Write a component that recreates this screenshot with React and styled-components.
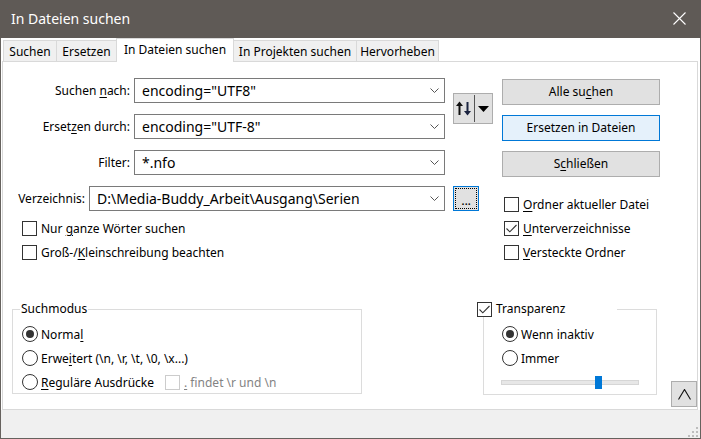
import React from 'react';
import styled, { createGlobalStyle } from 'styled-components';

const Global = createGlobalStyle`
  html, body { margin: 0; padding: 0; background: #fff; }
  body { font-family: "Noto Sans", "Segoe UI", sans-serif; font-size: 12px; color: #000; }
  * { box-sizing: border-box; }
  u { text-decoration: underline; text-underline-offset: 2px; }
`;

const Window = styled.div`
  width: 701px;
  height: 439px;
  display: flex;
  flex-direction: column;
  background: #fff;
  overflow: hidden;
`;

const TitleBar = styled.div`
  height: 38px;
  flex: none;
  background: #5f5a56;
  color: #fff;
  display: flex;
  align-items: center;
  justify-content: space-between;
  padding: 0 15px 1px 11px;
  font-size: 14px;
`;

const Body = styled.div`
  flex: 1;
  display: flex;
  flex-direction: column;
  border: 1px solid #66625e;
  border-top: none;
  min-height: 0;
`;

const TabStrip = styled.div`
  height: 23px;
  flex: none;
  display: flex;
  align-items: flex-end;
  padding-left: 2px;
  position: relative;
  z-index: 1;
`;

const Tab = styled.div`
  width: ${p => p.$w}px;
  height: ${p => (p.$active ? 24 : 21)}px;
  margin-left: ${p => (p.$first ? 0 : -1)}px;
  margin-bottom: ${p => (p.$active ? -1 : 0)}px;
  border: 1px solid #d9d9d9;
  border-bottom: none;
  background: ${p => (p.$active ? '#fff' : '#f0f0f0')};
  display: flex;
  align-items: center;
  justify-content: center;
  padding-bottom: ${p => (p.$active ? 3 : 0)}px;
  white-space: nowrap;
  position: relative;
  z-index: ${p => (p.$active ? 2 : 1)};
`;

const Panel = styled.div`
  height: 349px;
  flex: none;
  margin: 0 2px 0 1px;
  border: 1px solid #d9d9d9;
  display: flex;
  flex-direction: column;
  padding-bottom: 2px;
`;

const StatusStrip = styled.div`
  flex: 1;
  background: #f0f0f0;
  display: flex;
  justify-content: flex-end;
  align-items: flex-end;
  padding-right: 1px;
`;

const TopSection = styled.div`
  display: flex;
  padding-top: 16px;
`;

const FormCol = styled.div`
  width: 442px;
  display: flex;
  flex-direction: column;
  gap: 11px;
`;

const FieldRow = styled.div`
  display: flex;
  align-items: center;
  height: 25px;
  gap: 4px;
`;

const Label = styled.div`
  width: ${p => p.$w}px;
  flex: none;
  text-align: right;
  white-space: nowrap;
`;

const Combo = styled.div`
  flex: 1;
  height: 25px;
  border: 1px solid #7a7a7a;
  display: flex;
  align-items: center;
  justify-content: space-between;
  padding: 0 5px 1px 7px;
  font-size: 14px;
  white-space: nowrap;
`;

const CheckList = styled.div`
  display: flex;
  flex-direction: column;
  gap: 9px;
  margin-top: ${p => p.$mt}px;
  padding-left: ${p => p.$pl}px;
`;

const CheckRow = styled.label`
  display: flex;
  align-items: center;
  height: 15px;
  gap: 4px;
  white-space: nowrap;
  color: ${p => (p.$disabled ? '#838383' : '#000')};
`;

const Box = styled.span`
  width: 15px;
  height: 15px;
  flex: none;
  border: 1px solid ${p => (p.$disabled ? '#cccccc' : '#333')};
  background: #fff;
  display: flex;
  align-items: center;
  justify-content: center;
`;

const MidCol = styled.div`
  width: 40px;
  margin-left: 8px;
  padding-top: 15px;
  display: flex;
  flex-direction: column;
`;

const SwapButton = styled.div`
  width: 40px;
  height: 31px;
  background: #e1e1e1;
  border: 1px solid #adadad;
  display: flex;
  align-items: center;
  padding-left: 2px;
`;

const Divider = styled.span`
  width: 1px;
  height: 27px;
  background: #555;
  margin: 0 3px 0 2px;
`;

const BrowseButton = styled.div`
  width: 26px;
  height: 25px;
  margin-top: 62px;
  background: #e1e1e1;
  border: 1px solid #0078d7;
  padding: 1px;
`;

const FocusRect = styled.div`
  width: 100%;
  height: 100%;
  border: 1px dotted #000;
  display: flex;
  justify-content: center;
  align-items: flex-end;
  font-size: 13px;
  line-height: 15px;
  letter-spacing: -0.3px;
`;

const RightCol = styled.div`
  width: 158px;
  margin-left: 9px;
  padding-top: 1px;
  display: flex;
  flex-direction: column;
`;

const ButtonStack = styled.div`
  display: flex;
  flex-direction: column;
  gap: 10px;
`;

const Button = styled.div`
  height: 26px;
  background: ${p => (p.$focused ? '#e5f1fb' : '#e1e1e1')};
  border: 1px solid ${p => (p.$focused ? '#0078d7' : '#adadad')};
  display: flex;
  align-items: center;
  justify-content: center;
  padding-bottom: 1px;
  white-space: nowrap;
`;

const BottomSection = styled.div`
  margin-top: auto;
  display: flex;
  align-items: flex-start;
`;

const Group = styled.fieldset`
  margin: 0 0 0 ${p => p.$ml}px;
  width: ${p => p.$w}px;
  height: ${p => p.$h}px;
  border: 1px solid #dcdcdc;
  padding: 0 0 0 ${p => p.$lp}px;
  min-width: 0;
`;

const Legend = styled.legend`
  padding: 0 1px;
  height: 16px;
  line-height: 16px;
  margin-left: ${p => p.$ml || 0}px;
  display: flex;
  align-items: center;
  gap: 4px;
  width: ${p => (p.$w ? `${p.$w}px` : 'auto')};
  background: #fff;
`;

const GroupBody = styled.div`
  display: flex;
  flex-direction: column;
  gap: 8px;
  padding-top: 9px;
  padding-left: ${p => p.$pl}px;
`;

const RadioRow = styled.div`
  display: flex;
  align-items: center;
  height: 16px;
  gap: 3px;
  white-space: nowrap;
`;

const RadioCircle = styled.span`
  width: 16px;
  height: 16px;
  flex: none;
  border-radius: 50%;
  border: 1px solid #333;
  background: #fff;
  display: flex;
  align-items: center;
  justify-content: center;
  &::after {
    content: '';
    width: 8px;
    height: 8px;
    border-radius: 50%;
    background: ${p => (p.$on ? '#333' : 'transparent')};
  }
`;

const InlineOption = styled.span`
  display: flex;
  align-items: center;
  margin-left: 8px;
`;

const SliderTrack = styled.div`
  position: relative;
  width: 138px;
  height: 5px;
  margin: 6px 0 0 -1px;
  background: #e7e7e7;
  border: 1px solid #d6d6d6;
`;

const SliderThumb = styled.span`
  position: absolute;
  top: -5px;
  width: 7px;
  height: 13px;
  background: #0078d7;
`;

const UpButton = styled.div`
  width: 26px;
  height: 26px;
  margin: 80px 0 0 14px;
  background: #e1e1e1;
  border: 1px solid #adadad;
  display: flex;
  align-items: center;
  justify-content: center;
`;

const Chevron = () => (
  <svg width="9" height="5" viewBox="0 0 9 5">
    <polyline points="0.5,0.5 4.5,4.5 8.5,0.5" fill="none" stroke="#555" strokeWidth="1" />
  </svg>
);

const Check = () => (
  <svg width="11" height="9" viewBox="0 0 11 9">
    <polyline points="0.5,4.5 3.8,7.8 10.5,1" fill="none" stroke="#333" strokeWidth="1.1" />
  </svg>
);

const CheckBox = ({ checked, disabled }) => (
  <Box $disabled={disabled}>{checked && <Check />}</Box>
);

const Field = ({ label, w, value }) => (
  <FieldRow>
    <Label $w={w}>{label}</Label>
    <Combo>
      <span>{value}</span>
      <Chevron />
    </Combo>
  </FieldRow>
);

export default function App() {
  return (
    <>
      <Global />
      <Window>
        <TitleBar>
          <span>In Dateien suchen</span>
          <svg width="13" height="13" viewBox="0 0 13 13">
            <path d="M0.5 0.5 L12.5 12.5 M12.5 0.5 L0.5 12.5" stroke="#fff" strokeWidth="1.1" />
          </svg>
        </TitleBar>
        <Body>
          <TabStrip>
            <Tab $w={54} $first>Suchen</Tab>
            <Tab $w={61}>Ersetzen</Tab>
            <Tab $w={118} $active>In Dateien suchen</Tab>
            <Tab $w={124}>In Projekten suchen</Tab>
            <Tab $w={83}>Hervorheben</Tab>
          </TabStrip>
          <Panel>
            <TopSection>
              <FormCol>
                <Field w={127} label={<>Suchen <u>n</u>ach:</>} value={'encoding="UTF8"'} />
                <Field w={127} label={<>Erset<u>z</u>en durch:</>} value={'encoding="UTF-8"'} />
                <Field w={127} label="Filter:" value="*.nfo" />
                <Field w={82} label="Verzeichnis:" value={'D:\\Media-Buddy_Arbeit\\Ausgang\\Serien'} />
                <CheckList $mt={-1} $pl={19}>
                  <CheckRow><CheckBox /><span>Nur <u>g</u>anze Wörter suchen</span></CheckRow>
                  <CheckRow><CheckBox /><span>Groß-/<u>K</u>leinschreibung beachten</span></CheckRow>
                </CheckList>
              </FormCol>
              <MidCol>
                <SwapButton>
                  <svg width="16" height="15" viewBox="0 0 16 15">
                    <path d="M3.5 14 V3" stroke="#111" strokeWidth="2" />
                    <polygon points="0,5 3.5,0.5 7,5" fill="#111" />
                    <path d="M11.5 1 V12" stroke="#1b2440" strokeWidth="2" />
                    <polygon points="8,10 11.5,14.5 15,10" fill="#1b2440" />
                  </svg>
                  <Divider />
                  <svg width="11" height="6" viewBox="0 0 11 6">
                    <polygon points="0,0 11,0 5.5,6" fill="#000" />
                  </svg>
                </SwapButton>
                <BrowseButton>
                  <FocusRect>...</FocusRect>
                </BrowseButton>
              </MidCol>
              <RightCol>
                <ButtonStack>
                  <Button><span>Alle su<u>c</u>hen</span></Button>
                  <Button $focused>Ersetzen in Dateien</Button>
                  <Button><span>S<u>c</u>hließen</span></Button>
                </ButtonStack>
                <CheckList $mt={20} $pl={2}>
                  <CheckRow><CheckBox /><span><u>O</u>rdner aktueller Datei</span></CheckRow>
                  <CheckRow><CheckBox checked /><span><u>U</u>nterverzeichnisse</span></CheckRow>
                  <CheckRow><CheckBox /><span><u>V</u>ersteckte Ordner</span></CheckRow>
                </CheckList>
              </RightCol>
            </TopSection>
            <BottomSection>
              <Group $ml={9} $w={350} $h={93} $lp={7}>
                <Legend>Suchmodus</Legend>
                <GroupBody $pl={2}>
                  <RadioRow><RadioCircle $on /><span>Norma<u>l</u></span></RadioRow>
                  <RadioRow><RadioCircle /><span>Erwe<u>i</u>tert (\n, \r, \t, \0, \x...)</span></RadioRow>
                  <RadioRow>
                    <RadioCircle /><span><u>R</u>eguläre Ausdrücke</span>
                    <InlineOption>
                      <CheckRow $disabled><CheckBox disabled /><span><u>.</u> findet \r und \n</span></CheckRow>
                    </InlineOption>
                  </RadioRow>
                </GroupBody>
              </Group>
              <Group $ml={121} $w={174} $h={94} $lp={0}>
                <Legend $ml={-8} $w={141}>
                  <CheckBox checked />
                  <span>Transparenz</span>
                </Legend>
                <GroupBody $pl={18}>
                  <RadioRow><RadioCircle $on /><span>Wenn inaktiv</span></RadioRow>
                  <RadioRow><RadioCircle /><span>Immer</span></RadioRow>
                  <SliderTrack>
                    <SliderThumb style={{ left: 93 }} />
                  </SliderTrack>
                </GroupBody>
              </Group>
              <UpButton>
                <svg width="13" height="11" viewBox="0 0 13 11">
                  <polyline points="0.5,10.5 6.5,0.5 12.5,10.5" fill="none" stroke="#111" strokeWidth="1.1" />
                </svg>
              </UpButton>
            </BottomSection>
          </Panel>
          <StatusStrip>
            <svg width="11" height="11" viewBox="0 0 11 11">
              <g fill="#bdbdbd">
                <rect x="8" y="0" width="2" height="2" />
                <rect x="4" y="4" width="2" height="2" />
                <rect x="8" y="4" width="2" height="2" />
                <rect x="0" y="8" width="2" height="2" />
                <rect x="4" y="8" width="2" height="2" />
                <rect x="8" y="8" width="2" height="2" />
              </g>
            </svg>
          </StatusStrip>
        </Body>
      </Window>
    </>
  );
}
